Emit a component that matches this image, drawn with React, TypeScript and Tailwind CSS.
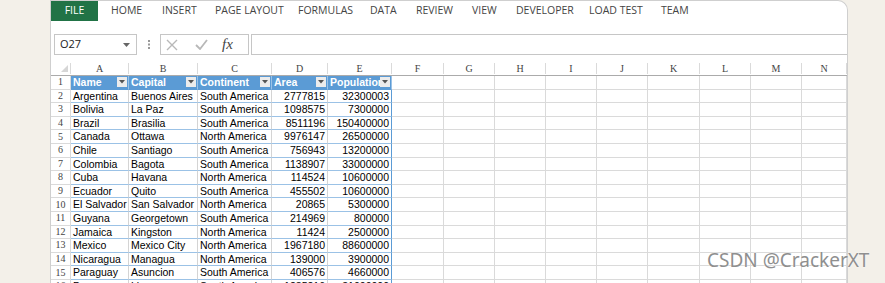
import React from 'react';

const tabs: { label: string; w: string }[] = [
  { label: 'HOME', w: 'w-[51px]' },
  { label: 'INSERT', w: 'w-[53px]' },
  { label: 'PAGE LAYOUT', w: 'w-[83px]' },
  { label: 'FORMULAS', w: 'w-[72px]' },
  { label: 'DATA', w: 'w-[46px]' },
  { label: 'REVIEW', w: 'w-[56px]' },
  { label: 'VIEW', w: 'w-[44px]' },
  { label: 'DEVELOPER', w: 'w-[73px]' },
  { label: 'LOAD TEST', w: 'w-[72px]' },
  { label: 'TEAM', w: 'w-[40px]' },
];

const letters = ['A', 'B', 'C', 'D', 'E', 'F', 'G', 'H', 'I', 'J', 'K', 'L', 'M', 'N'];

const rows: [string, string, string, string, string][] = [
  ['Argentina', 'Buenos Aires', 'South America', '2777815', '32300003'],
  ['Bolivia', 'La Paz', 'South America', '1098575', '7300000'],
  ['Brazil', 'Brasilia', 'South America', '8511196', '150400000'],
  ['Canada', 'Ottawa', 'North America', '9976147', '26500000'],
  ['Chile', 'Santiago', 'South America', '756943', '13200000'],
  ['Colombia', 'Bagota', 'South America', '1138907', '33000000'],
  ['Cuba', 'Havana', 'North America', '114524', '10600000'],
  ['Ecuador', 'Quito', 'South America', '455502', '10600000'],
  ['El Salvador', 'San Salvador', 'North America', '20865', '5300000'],
  ['Guyana', 'Georgetown', 'South America', '214969', '800000'],
  ['Jamaica', 'Kingston', 'North America', '11424', '2500000'],
  ['Mexico', 'Mexico City', 'North America', '1967180', '88600000'],
  ['Nicaragua', 'Managua', 'North America', '139000', '3900000'],
  ['Paraguay', 'Asuncion', 'South America', '406576', '4660000'],
  ['Peru', 'Lima', 'South America', '1285216', '31000000'],
];

const gridCols =
  'grid shrink-0 grid-cols-[20px_58px_69px_74px_56px_64px_52px_51px_51px_51px_51px_52px_51px_51px_1fr]';

const FilterButton = () => (
  <span className="absolute top-[1px] right-[1px] flex h-[10px] w-[10px] items-center justify-center bg-[#ececec]">
    <svg width="6" height="4" viewBox="0 0 6 4">
      <path d="M0 0h6L3 3.5z" fill="#555" />
    </svg>
  </span>
);

const HeaderCell = ({ label }: { label: string }) => (
  <div className="relative flex items-center overflow-hidden border-r border-b border-r-[#9bc2e6] border-b-[#5b9bd5] bg-[#5b9bd5] pl-[2px] text-[10.5px] font-bold leading-none text-white">
    <span className="whitespace-nowrap">{label}</span>
    <FilterButton />
  </div>
);

const EmptyCells = () => (
  <>
    {Array.from({ length: 9 }).map((_, i) => (
      <div key={i} className="border-r border-b border-[#dadada]" />
    ))}
  </>
);

const App: React.FC = () => {
  return (
    <div className="relative flex h-[283px] w-[885px] overflow-hidden bg-[#f3f0e9]">
      <div className="w-[50px] shrink-0" />
      <div className="flex w-[798px] shrink-0 flex-col overflow-hidden rounded-tr-[10px] border-t border-r border-l border-[#cfcfcf] bg-white font-['Open_Sans',sans-serif]">
        {/* ribbon tabs */}
        <div className="flex h-[20px] shrink-0 items-center text-[10.5px] text-[#444]">
          <div className="flex h-full w-[47px] items-center justify-center bg-[#217346] text-white">FILE</div>
          <div className="w-[13px]" />
          {tabs.map((t) => (
            <div key={t.label} className={`${t.w} whitespace-nowrap`}>
              {t.label}
            </div>
          ))}
        </div>

        {/* formula bar */}
        <div className="mt-[13px] flex h-[21px] shrink-0 items-stretch">
          <div className="ml-[3px] flex w-[83px] items-center border border-[#c6c6c6] pl-[5px] pr-[6px] text-[11px] text-[#222]">
            <span>O27</span>
            <svg className="ml-auto" width="7" height="4" viewBox="0 0 7 4">
              <path d="M0 0h7L3.5 4z" fill="#666" />
            </svg>
          </div>
          <div className="flex w-[23px] items-center justify-center">
            <svg width="2" height="9" viewBox="0 0 2 9">
              <rect x="0" y="0" width="2" height="2" fill="#999" />
              <rect x="0" y="3.5" width="2" height="2" fill="#999" />
              <rect x="0" y="7" width="2" height="2" fill="#999" />
            </svg>
          </div>
          <div className="flex w-[89px] items-center border border-[#c6c6c6]">
            <svg className="ml-[5px]" width="12" height="12" viewBox="0 0 12 12">
              <path d="M1 1l10 10M11 1L1 11" stroke="#b8b8b8" strokeWidth="1.4" />
            </svg>
            <svg className="ml-[17px]" width="13" height="11" viewBox="0 0 13 11">
              <path d="M1 6l4 4 7-9" stroke="#b8b8b8" strokeWidth="1.8" fill="none" />
            </svg>
            <span className="ml-[14px] font-['Liberation_Serif',serif] text-[15px] italic leading-none text-[#444]">
              fx
            </span>
          </div>
          <div className="ml-[2px] flex-1 border-y border-l border-[#c6c6c6]" />
        </div>

        {/* column headers */}
        <div className={`${gridCols} mt-[8px] h-[13px] border-b border-[#ababab] font-['Liberation_Serif',serif] text-[10px] leading-none text-[#444]`}>
          <div className="relative border-r border-[#dadada]">
            <svg className="absolute right-[2px] bottom-[2px]" width="7" height="7" viewBox="0 0 7 7">
              <path d="M7 0v7H0z" fill="#d6d6d6" />
            </svg>
          </div>
          {letters.map((l) => (
            <div key={l} className="flex items-center justify-center border-r border-[#dadada]">
              {l}
            </div>
          ))}
          <div />
        </div>

        {/* sheet rows */}
        <div className="flex shrink-0 flex-col font-['Liberation_Sans',Arial,sans-serif]">
          <div className={`${gridCols} h-[13.6px]`}>
            <div className="flex items-center justify-center border-r border-b border-[#dadada] font-['Liberation_Serif',serif] text-[10px] leading-none text-[#444]">
              1
            </div>
            <HeaderCell label="Name" />
            <HeaderCell label="Capital" />
            <HeaderCell label="Continent" />
            <HeaderCell label="Area" />
            <HeaderCell label="Population" />
            <EmptyCells />
          </div>
          {rows.map((r, i) => (
            <div key={i} className={`${gridCols} h-[13.6px] text-[10.5px] leading-none text-black`}>
              <div className="flex items-center justify-center border-r border-b border-[#dadada] font-['Liberation_Serif',serif] text-[10px] text-[#444]">
                {i + 2}
              </div>
              <div className="flex items-center overflow-hidden whitespace-nowrap border-r border-b border-r-[#d4d4d4] border-b-[#9bc2e6] pl-[2px]">
                {r[0]}
              </div>
              <div className="flex items-center overflow-hidden whitespace-nowrap border-r border-b border-r-[#d4d4d4] border-b-[#9bc2e6] pl-[2px]">
                {r[1]}
              </div>
              <div className="flex items-center overflow-hidden whitespace-nowrap border-r border-b border-r-[#d4d4d4] border-b-[#9bc2e6] pl-[2px]">
                {r[2]}
              </div>
              <div className="flex items-center justify-end border-r border-b border-r-[#d4d4d4] border-b-[#9bc2e6] pr-[2px]">
                {r[3]}
              </div>
              <div className="flex items-center justify-end border-r border-b border-r-[#5b9bd5] border-b-[#9bc2e6] pr-[2px]">
                {r[4]}
              </div>
              <EmptyCells />
            </div>
          ))}
        </div>
      </div>
      <div className="flex-1" />

      <div className="absolute top-[251px] left-[707px] font-['Noto_Sans',sans-serif] text-[19px] leading-none text-[#8f8f8f] [text-shadow:0_0_2px_#fff]">
        CSDN @CrackerXT
      </div>
    </div>
  );
};

export default App;
